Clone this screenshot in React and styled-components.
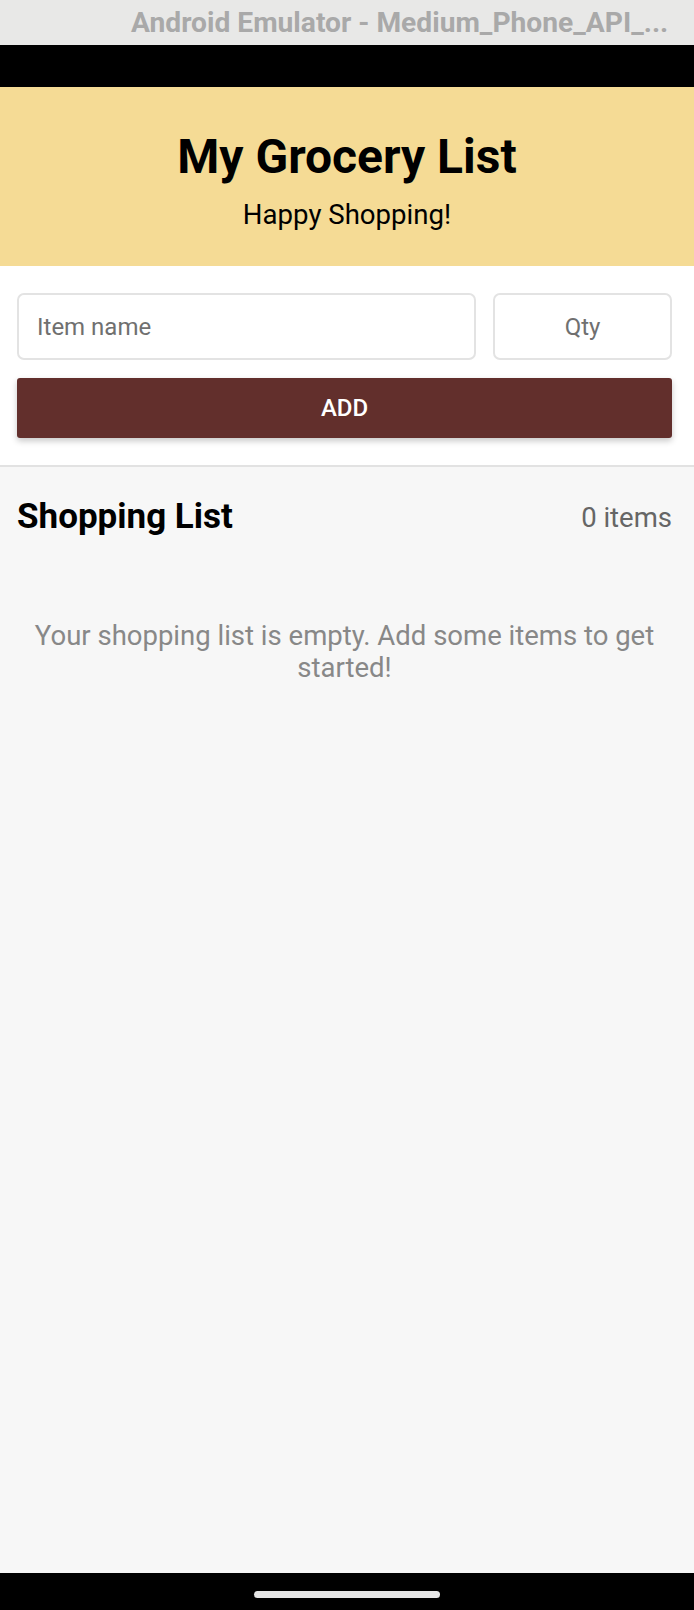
import React, { useState } from 'react'
import styled, { createGlobalStyle } from 'styled-components'

const GlobalStyle = createGlobalStyle`
	html, body {
		margin: 0;
		padding: 0;
		background: #000000;
	}

	* {
		box-sizing: border-box;
	}
`

const Frame = styled.div`
	width: 694px;
	height: 1610px;
	display: flex;
	flex-direction: column;
	font-family: Roboto, 'Noto Sans', sans-serif;
	overflow: hidden;
`

const WindowBar = styled.div`
	height: 45px;
	flex-shrink: 0;
	background-color: #e8e8e7;
	display: flex;
	align-items: center;
	padding-left: 131px;

	span {
		font-size: 28.2px;
		font-weight: 700;
		color: #a9a9a9;
		white-space: nowrap;
	}
`

const StatusBar = styled.div`
	height: 42px;
	flex-shrink: 0;
	background-color: #000000;
`

const Header = styled.header`
	height: 179px;
	flex-shrink: 0;
	background-color: #f5db95;
	display: flex;
	flex-direction: column;
	align-items: center;
	padding-top: 42px;

	h1 {
		margin: 0;
		font-size: 48px;
		line-height: 56px;
		font-weight: 700;
		color: #000000;
	}

	p {
		margin: 14px 0 0;
		font-size: 27.6px;
		line-height: 32px;
		color: #000000;
	}
`

const FormSection = styled.section`
	background-color: #ffffff;
	padding: 27px 22px 27px 17px;
	border-bottom: 2px solid #e2e2e2;
	display: flex;
	flex-direction: column;
	gap: 18px;
	flex-shrink: 0;
`

const InputRow = styled.div`
	display: flex;
	gap: 17px;
`

const Field = styled.input`
	height: 67px;
	flex: ${(p) => (p.$narrow ? '0 0 179px' : '1 1 auto')};
	min-width: 0;
	border: 2px solid #e3e3e3;
	border-radius: 7px;
	background: #ffffff;
	padding: 0 18px;
	font-family: Roboto, 'Noto Sans', sans-serif;
	font-size: 24px;
	color: #222222;
	text-align: ${(p) => (p.$narrow ? 'center' : 'left')};
	outline: none;

	&::placeholder {
		color: #707070;
	}
`

const AddButton = styled.button`
	height: 60px;
	width: 100%;
	border: none;
	border-radius: 3px;
	background-color: #622f2c;
	color: #ffffff;
	font-family: Roboto, 'Noto Sans', sans-serif;
	font-size: 24px;
	font-weight: 500;
	box-shadow: 0 3px 6px rgba(0, 0, 0, 0.22);
	cursor: pointer;
`

const ListSection = styled.main`
	flex: 1;
	background-color: #f7f7f7;
	padding: 30px 22px 0 17px;
`

const ListHeader = styled.div`
	display: flex;
	justify-content: space-between;
	align-items: center;

	h2 {
		margin: 0;
		font-size: 35px;
		line-height: 40px;
		font-weight: 700;
		color: #000000;
	}

	span {
		font-size: 27.5px;
		color: #666666;
	}
`

const EmptyText = styled.p`
	margin: 83px 0 0;
	text-align: center;
	font-size: 27.5px;
	line-height: 32px;
	color: #888888;
`

const NavBar = styled.div`
	height: 37px;
	flex-shrink: 0;
	background-color: #000000;
	display: flex;
	justify-content: center;
	padding-top: 18px;

	.handle {
		width: 186px;
		height: 7px;
		border-radius: 4px;
		background-color: #e6e6e6;
	}
`

export default function App() {
	const [items] = useState([])

	return (
		<>
			<GlobalStyle />
			<Frame>
				<WindowBar>
					<span>Android Emulator - Medium_Phone_API_...</span>
				</WindowBar>
				<StatusBar />
				<Header>
					<h1>My Grocery List</h1>
					<p>Happy Shopping!</p>
				</Header>
				<FormSection>
					<InputRow>
						<Field placeholder='Item name' />
						<Field $narrow placeholder='Qty' />
					</InputRow>
					<AddButton type='button'>ADD</AddButton>
				</FormSection>
				<ListSection>
					<ListHeader>
						<h2>Shopping List</h2>
						<span>{items.length} items</span>
					</ListHeader>
					{items.length === 0 && (
						<EmptyText>
							Your shopping list is empty. Add some items to get started!
						</EmptyText>
					)}
				</ListSection>
				<NavBar>
					<div className='handle' />
				</NavBar>
			</Frame>
		</>
	)
}
